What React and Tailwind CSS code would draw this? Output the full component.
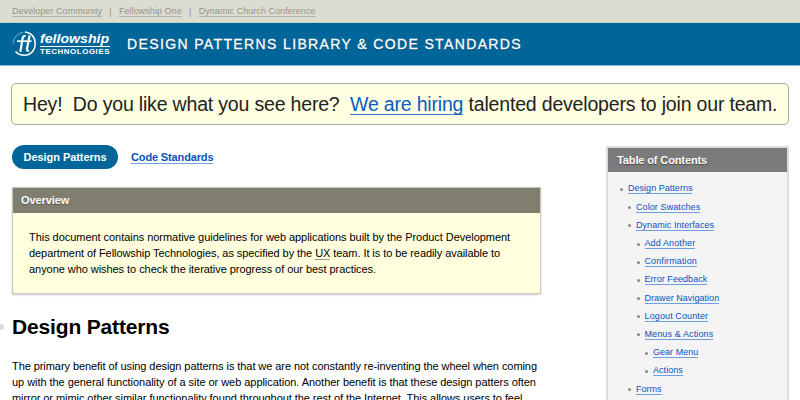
const tocItems = [
  { label: "Design Patterns", indent: "pl-0", tracking: "tracking-[0.03px]" },
  { label: "Color Swatches", indent: "pl-[8px]", tracking: "tracking-[0.09px]" },
  { label: "Dynamic Interfaces", indent: "pl-[8px]", tracking: "tracking-[0.06px]" },
  { label: "Add Another", indent: "pl-[16.500px]", tracking: "tracking-[0.12px]" },
  { label: "Confirmation", indent: "pl-[16.500px]", tracking: "tracking-[0.12px]" },
  { label: "Error Feedback", indent: "pl-[16.500px]", tracking: "tracking-[0.06px]" },
  { label: "Drawer Navigation", indent: "pl-[16.500px]", tracking: "tracking-[0.04px]" },
  { label: "Logout Counter", indent: "pl-[16.500px]", tracking: "tracking-[0.12px]" },
  { label: "Menus & Actions", indent: "pl-[16.500px]", tracking: "tracking-[0.12px]" },
  { label: "Gear Menu", indent: "pl-[25px]", tracking: "tracking-[0.03px]" },
  { label: "Actions", indent: "pl-[25px]", tracking: "tracking-[0.06px]" },
  { label: "Forms", indent: "pl-[8px]", tracking: "tracking-[0px]" },
];

function Logo() {
  return (
    <div className="flex h-[26px] w-[98px] items-center text-white">
      <svg width="25" height="26" viewBox="0 0 25 26" fill="none" stroke="currentColor">
        <path d="M13 1C19 1.500 23.200 6 23.200 12.500C23.200 19.500 18.500 24.300 12.500 24.300C8.500 24.300 5.500 22.800 3.500 20.500" strokeWidth="1.500" />
        <path d="M11 1.500C5 2.500 1.200 7 1.200 12.500" strokeWidth="1" opacity=".5" />
        <path d="M13.500 5.200C11.800 4.600 11 5.500 10.700 7L8.300 20.800M17.600 4.500L15 17.800C14.700 19.600 15.500 20 17 19.600" strokeWidth="2.200" />
        <path d="M5 10.200H19.500" strokeWidth="1.700" />
      </svg>
      <div className="ml-[3px] flex w-[70px] flex-col">
        <span className="h-[13px] border-b border-white">
          <span className="block w-[60px] origin-left scale-x-[1.13] text-[12.500px] leading-[11px] font-bold whitespace-nowrap italic">fellowship</span>
        </span>
        <span className="mt-px w-[60px] origin-left scale-x-[1.130] text-[7px] leading-[7px] font-bold tracking-[0.500px] whitespace-nowrap">TECHNOLOGIES</span>
      </div>
    </div>
  );
}

export default function App() {
  return (
    <div className="h-[400px] w-[800px] overflow-hidden bg-white font-['Liberation_Sans',Arial,sans-serif] text-[11px] text-black">
      <nav className="flex h-[23px] items-center border-b border-[#bfd0cb] bg-[#dcddd0] pt-px pl-3 text-[9px] leading-[10px] tracking-[0.05px] text-[#92938b]">
        <a className="border-b border-[#b3b4aa]">Developer Community</a>
        <span className="w-[17px] text-center">|</span>
        <a className="border-b border-[#b3b4aa]">Fellowship One</a>
        <span className="w-[17px] text-center">|</span>
        <a className="border-b border-[#b3b4aa]">Dynamic Church Conference</a>
      </nav>
      <header className="flex h-[43px] items-center border-b border-[#8db9d2] bg-[#006699] pl-3">
        <Logo />
        <span className="ml-[17px] text-[14px] tracking-[1.370px] whitespace-nowrap text-white [-webkit-text-stroke:0.3px_white] [text-shadow:0_1px_1px_#003c66]">DESIGN PATTERNS LIBRARY &amp; CODE STANDARDS</span>
      </header>
      <div className="mt-[17px] ml-[11px] flex h-[42px] w-[778px] items-baseline rounded-[5px] border border-[#a9a9a2] bg-[#ffffe1] pt-[10px] pl-[11px] text-[19.500px] leading-[20px] tracking-[-0.18px] whitespace-pre text-[#222]">
        <span>{"Hey!  Do you like what you see here?  "}</span>
        <a className="border-b border-[#3b80d0] text-[#0a5cc2]">We are hiring</a>
        <span> talented developers to join our team.</span>
      </div>
      <div className="flex">
        <main className="ml-3 w-[528px]">
          <div className="mt-5 flex h-6 items-center font-bold">
            <a className="flex h-6 w-[106px] items-center justify-center rounded-full bg-[#006699] tracking-[-0.05px] text-white">Design Patterns</a>
            <a className="mt-[2px] ml-[13px] border-b border-[#6d9fdf] leading-[11px] tracking-[-0.14px] text-[#0a53bd]">Code Standards</a>
          </div>
          <section className="mt-[18px] h-[107px] w-[529px] border border-[#c9cabd] bg-[#ffffdd] shadow-[0_1px_2px_#ccc]">
            <h2 className="flex h-[25px] items-center bg-[#807f6f] pl-2 font-bold tracking-[-0.1px] text-white [text-shadow:0_1px_1px_#555]">Overview</h2>
            <div className="mt-4 ml-4 leading-[16px] whitespace-nowrap">
              <p className="tracking-[-0.045px]">This document contains normative guidelines for web applications built by the Product Development</p>
              <p className="tracking-[-0.07px]">department of Fellowship Technologies, as specified by the <abbr className="border-b border-[#999] no-underline">UX</abbr> team. It is to be readily available to</p>
              <p className="tracking-[-0.055px]">anyone who wishes to check the iterative progress of our best practices.</p>
            </div>
          </section>
          <div className="mt-[21px] -ml-3 flex h-6 items-center">
            <span className="-ml-[2px] h-[6px] w-[6px] rounded-full bg-[#ddd]" />
            <h1 className="ml-2 text-[21px] font-bold tracking-[-0.16px]">Design Patterns</h1>
          </div>
          <div className="mt-[19px] leading-[16px] whitespace-nowrap">
            <p className="tracking-[-0.07px]">The primary benefit of using design patterns is that we are not constantly re-inventing the wheel when coming</p>
            <p className="tracking-[-0.05px]">up with the general functionality of a site or web application. Another benefit is that these design patters often</p>
            <p className="tracking-[-0.065px]">mirror or mimic other similar functionality found throughout the rest of the Internet. This allows users to feel</p>
          </div>
        </main>
        <aside className="mt-[21px] ml-[66px] h-[260px] w-[183px] border-2 border-[#dcdcdc] bg-[#f4f4f4]">
          <h2 className="flex h-6 items-center bg-[#7b7b7b] pl-[9px] font-bold tracking-[-0.12px] text-white [text-shadow:0_1px_1px_#444]">Table of Contents</h2>
          <ul className="mt-[8.400px] ml-3 text-[9px] whitespace-nowrap text-[#0a53bd]">
            {tocItems.map((item) => (
              <li key={item.label} className={`flex h-[18.200px] items-center ${item.indent}`}>
                <span className="mr-[5px] h-[3px] w-[3px] rounded-full bg-[#888]" />
                <a className={`border-b border-[#6d9fdf] leading-[9px] ${item.tracking}`}>{item.label}</a>
              </li>
            ))}
          </ul>
        </aside>
      </div>
    </div>
  );
}
